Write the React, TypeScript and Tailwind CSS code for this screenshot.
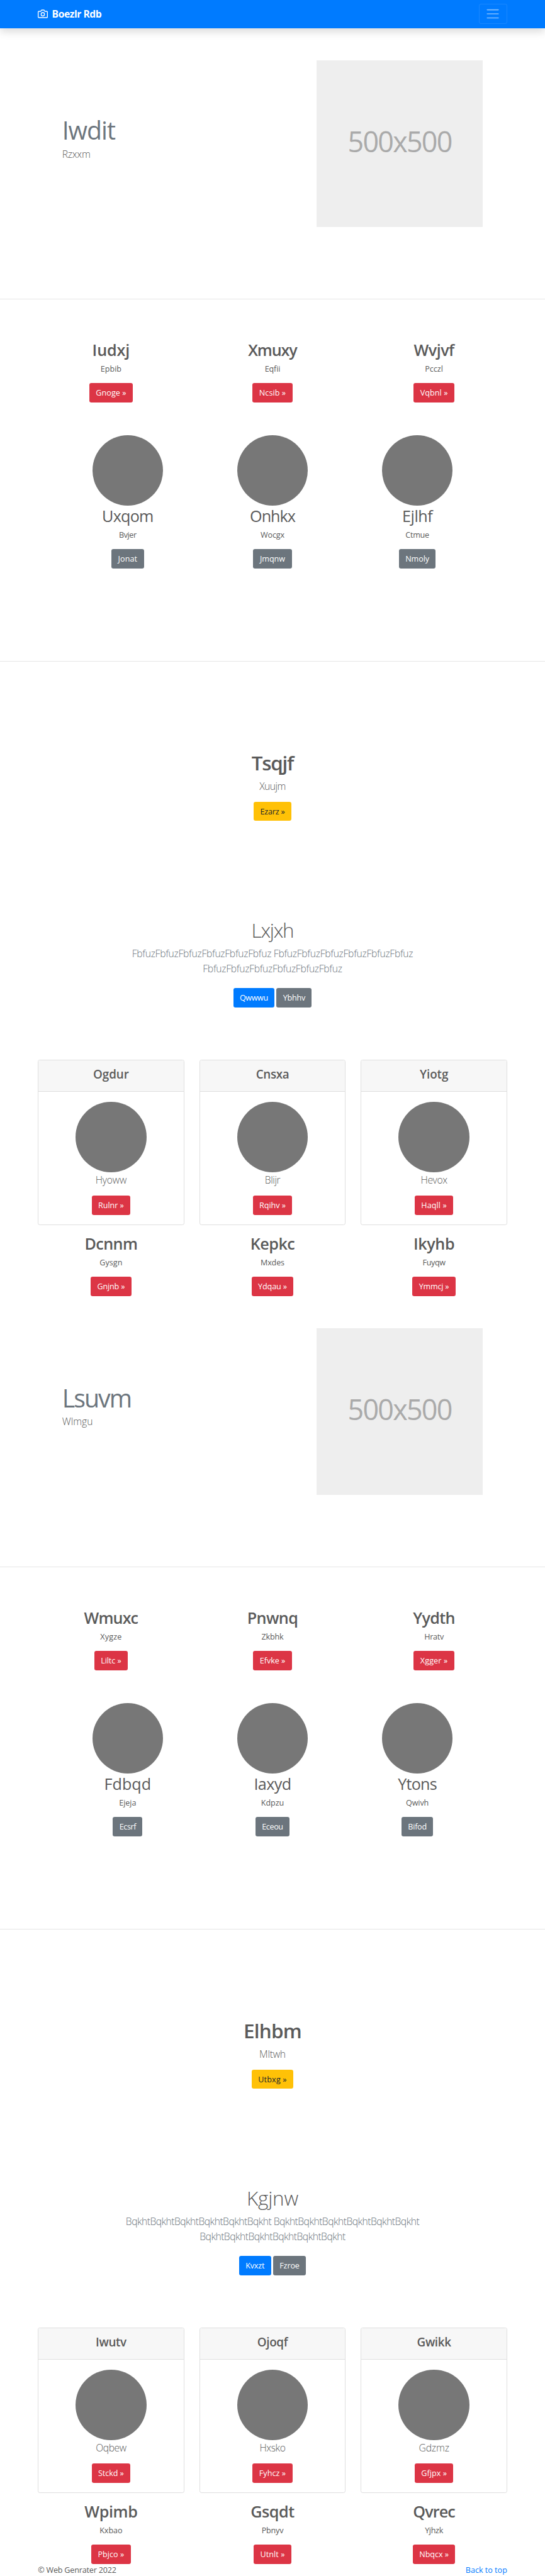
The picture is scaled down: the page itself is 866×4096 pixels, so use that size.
import type { ReactNode } from 'react';

/* Letter spacing steps, in thousandths of an em. */
const TRACK: Record<string, string> = {
  '15': 'tracking-[0.015em]',
  '10': 'tracking-[0.01em]',
  '5': 'tracking-[0.005em]',
  '0': 'tracking-normal',
  '-5': 'tracking-[-0.005em]',
  '-10': 'tracking-[-0.01em]',
  '-15': 'tracking-[-0.015em]',
  '-20': 'tracking-[-0.02em]',
  '-25': 'tracking-[-0.025em]',
  '-30': 'tracking-[-0.03em]',
  '-35': 'tracking-[-0.035em]',
  '-40': 'tracking-[-0.04em]',
  '-45': 'tracking-[-0.045em]',
  '-50': 'tracking-[-0.05em]',
};

type Txt = [text: string, track: number];

function T({ t }: { t: Txt }) {
  return <span className={TRACK[String(t[1])]}>{t[0]}</span>;
}

const TONES = {
  danger: 'bg-[#dc3545] text-white',
  secondary: 'bg-[#6c757d] text-white',
  primary: 'bg-[#007bff] text-white',
  warning: 'bg-[#ffc107] text-[#212529]',
};

function Button({ t, tone }: { t: Txt; tone: keyof typeof TONES }) {
  return (
    <a
      href="#"
      className={`flex h-[38px] items-center rounded px-[13px] pt-px text-[15.7px] leading-6 whitespace-pre ${TONES[tone]}`}
    >
      <T t={t} />
    </a>
  );
}

function Feature({ item, tone, light }: { item: Txt[]; tone: keyof typeof TONES; light?: boolean }) {
  return (
    <div className="flex flex-col items-center">
      <h2
        className={`mb-2 h-[38.4px] text-[31.4px] leading-[40.4px] ${light ? 'font-normal' : 'font-semibold'}`}
      >
        <T t={item[0]} />
      </h2>
      <p className="mb-4 h-6 text-[15.7px] leading-[25px]">
        <T t={item[1]} />
      </p>
      <Button t={item[2]} tone={tone} />
    </div>
  );
}

function Circle() {
  return <div className="size-[140px] rounded-full bg-[#777]" />;
}

function Lead({ children, className = '' }: { children: ReactNode; className?: string }) {
  return <p className={`text-[19.6px] leading-[30px] font-light ${className}`}>{children}</p>;
}

type Block = {
  hero: Txt[];
  top: Txt[][];
  people: Txt[][];
  cta: Txt[];
  intro: Txt[];
  cards: Txt[][];
  bottom: Txt[][];
};

const BLOCKS: Block[] = [
  {
    hero: [['Iwdit', -25], ['Rzxxm', -15]],
    top: [
      [['Iudxj', -5], ['Epbib', 0], ['Gnoge »', 5]],
      [['Xmuxy', -45], ['Eqfii', -10], ['Ncsib »', 5]],
      [['Wvjvf', -20], ['Pcczl', 0], ['Vqbnl »', 5]],
    ],
    people: [
      [['Uxqom', -30], ['Bvjer', -30], ['Jonat', 10]],
      [['Onhkx', -40], ['Wocgx', -10], ['Jmqnw', 0]],
      [['Ejlhf', -20], ['Ctmue', -20], ['Nmoly', -5]],
    ],
    cta: [['Tsqjf', -40], ['Xuujm', -35], ['Ezarz »', -15]],
    intro: [
      ['Lxjxh', -40],
      ['FbfuzFbfuzFbfuzFbfuzFbfuzFbfuz', -20],
      ['Qwwwu', -30],
      ['Ybhhv', -20],
    ],
    cards: [
      [['Ogdur', -5], ['Hyoww', -15], ['Rulnr »', -5]],
      [['Cnsxa', -20], ['Blijr', -30], ['Rqihv »', 0]],
      [['Yiotg', -5], ['Hevox', -25], ['Haqll »', 10]],
    ],
    bottom: [
      [['Dcnnm', -25], ['Gysgn', 5], ['Gnjnb »', -15]],
      [['Kepkc', -20], ['Mxdes', -10], ['Ydqau »', -10]],
      [['Ikyhb', -15], ['Fuyqw', -30], ['Ymmcj »', -15]],
    ],
  },
  {
    hero: [['Lsuvm', -50], ['Wlmgu', 0]],
    top: [
      [['Wmuxc', -35], ['Xygze', 15], ['Liltc »', -5]],
      [['Pnwnq', -25], ['Zkbhk', -15], ['Efvke »', -5]],
      [['Yydth', -25], ['Hratv', -25], ['Xgger »', 10]],
    ],
    people: [
      [['Fdbqd', 0], ['Ejeja', -5], ['Ecsrf', -35]],
      [['Iaxyd', -25], ['Kdpzu', -5], ['Eceou', -30]],
      [['Ytons', -30], ['Qwivh', -10], ['Bifod', -20]],
    ],
    cta: [['Elhbm', -25], ['Mltwh', -15], ['Utbxg »', 15]],
    intro: [
      ['Kgjnw', -5],
      ['BqkhtBqkhtBqkhtBqkhtBqkhtBqkht', -35],
      ['Kvxzt', -15],
      ['Fzroe', -10],
    ],
    cards: [
      [['Iwutv', -20], ['Oqbew', -30], ['Stckd »', -5]],
      [['Ojoqf', -15], ['Hxsko', -30], ['Fyhcz »', 5]],
      [['Gwikk', -20], ['Gdzmz', -10], ['Gfjpx »', 5]],
    ],
    bottom: [
      [['Wpimb', -15], ['Kxbao', 0], ['Pbjco »', 5]],
      [['Gsqdt', -20], ['Pbnyv', -15], ['Utnlt »', 5]],
      [['Qvrec', -35], ['Yjhzk', -25], ['Nbqcx »', -5]],
    ],
  },
];

function Section({ b }: { b: Block }) {
  return (
    <>
      <section className="flex h-[537px] justify-between pr-[123px] pl-[123px]">
        <div className="pt-[172px]">
          <h2 className="mb-0.5 text-[49px] leading-[60px] text-[#6c757d]">
            <T t={b.hero[0]} />
          </h2>
          <Lead>
            <T t={b.hero[1]} />
          </Lead>
        </div>
        <div className="mt-16 flex h-[330px] w-[330px] items-center justify-center bg-[#eee] pb-2.5 text-[56px] text-[#aaa]">
          <T t={['500x500', -40]} />
        </div>
      </section>
      <hr className="h-px border-0 bg-black/10" />

      <section className="flex h-[717.3px] flex-col items-center pt-[79.7px]">
        <div className="grid w-[960px] grid-cols-3">
          {b.top.map((f) => (
            <Feature key={f[0][0]} item={f} tone="danger" />
          ))}
        </div>
        <div className="mt-[64.5px] grid w-[861px] grid-cols-3">
          {b.people.map((f) => (
            <div key={f[0][0]} className="flex flex-col items-center">
              <Circle />
              <Feature item={f} tone="secondary" light />
            </div>
          ))}
        </div>
      </section>
      <hr className="h-px border-0 bg-black/10" />

      <section className="flex h-[507.3px] flex-col items-center pt-[175.3px]">
        <h1 className="mb-2 h-12 text-[39.2px] leading-[50.6px] font-semibold">
          <T t={b.cta[0]} />
        </h1>
        <Lead className="mb-4">
          <T t={b.cta[1]} />
        </Lead>
        <Button t={b.cta[2]} tone="warning" />
      </section>

      <section className="flex h-[282.4px] flex-col items-center">
        <h1 className="mb-2 h-12 text-[39.2px] leading-[50.6px] font-light">
          <T t={b.intro[0]} />
        </h1>
        <Lead className="mb-6 w-[610px] text-center text-[#6c757d]">
          <span className={TRACK[String(b.intro[1][1])]}>
            {b.intro[1][0]} {b.intro[1][0]} {b.intro[1][0]}
          </span>
        </Lead>
        <div className="flex gap-1">
          <Button t={b.intro[2]} tone="primary" />
          <Button t={b.intro[3]} tone="secondary" />
        </div>
      </section>

      <section className="mb-4 grid h-[327.8px] grid-cols-3 gap-[30px] px-[75px]">
        {b.cards.map((c) => (
          <div
            key={c[0][0]}
            className="flex flex-col overflow-hidden rounded border border-[#dfdfdf] bg-white"
          >
            <div className="h-[61.8px] border-b border-[#dfdfdf] bg-[#f7f7f7] pt-3 text-center">
              <h4 className="text-[23.5px] leading-[30.4px] font-semibold">
                <T t={c[0]} />
              </h4>
            </div>
            <div className="flex flex-col items-center pt-5">
              <Circle />
              <Lead className="mb-4">
                <T t={c[1]} />
              </Lead>
              <Button t={c[2]} tone="danger" />
            </div>
          </div>
        ))}
      </section>

      <section className="mx-auto grid h-[124.4px] w-[960px] grid-cols-3">
        {b.bottom.map((f) => (
          <Feature key={f[0][0]} item={f} tone="danger" />
        ))}
      </section>
    </>
  );
}

export default function App() {
  return (
    <div className="w-[1080px] overflow-hidden bg-white font-['Open_Sans','Noto_Sans',sans-serif] text-[15.7px] text-[#5a5a5a] [zoom:0.80185]">
      <header className="flex h-14 items-center justify-between bg-[#007bff] px-[75px] shadow-[0_8px_16px_rgba(0,0,0,0.15)]">
        <a href="#" className="flex items-center text-[19.6px] leading-[30px] font-bold text-white">
          <svg
            className="mr-2 size-5"
            viewBox="0 0 24 24"
            fill="none"
            stroke="currentColor"
            strokeWidth="2"
            strokeLinecap="round"
            strokeLinejoin="round"
          >
            <path d="M23 19a2 2 0 0 1-2 2H3a2 2 0 0 1-2-2V8a2 2 0 0 1 2-2h4l2-3h6l2 3h4a2 2 0 0 1 2 2z" />
            <circle cx="12" cy="13" r="4" />
          </svg>
          <T t={['Boezlr Rdb', -30]} />
        </a>
        <button className="flex h-10 w-14 items-center justify-center rounded border border-white/10">
          <svg
            className="size-[30px]"
            viewBox="0 0 30 30"
            stroke="rgba(255,255,255,0.5)"
            strokeWidth="2"
            strokeLinecap="round"
            strokeMiterlimit="10"
          >
            <path d="M4 7h22M4 15h22M4 23h22" />
          </svg>
        </button>
      </header>
      <main>
        {BLOCKS.map((b) => (
          <Section key={b.hero[0][0]} b={b} />
        ))}
      </main>
      <footer className="flex h-[23.4px] justify-between px-[75px] leading-[25px]">
        <p>
          <T t={['© Web Genrater 2022', -15]} />
        </p>
        <a href="#" className="text-[#007bff]">
          <T t={['Back to top', 0]} />
        </a>
      </footer>
    </div>
  );
}
